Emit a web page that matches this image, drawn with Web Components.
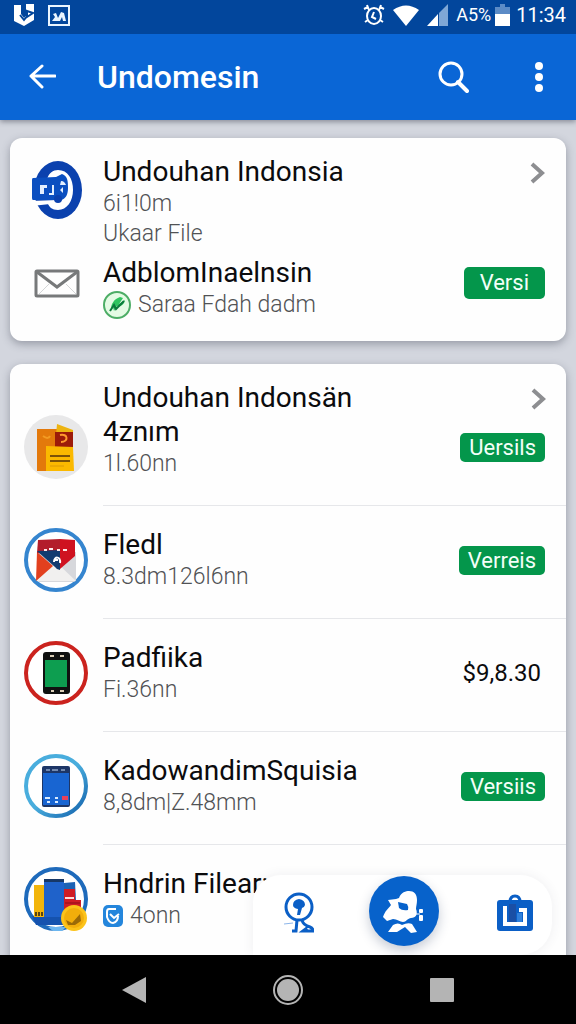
<!DOCTYPE html>
<html lang="id">
<head>
<meta charset="utf-8">
<meta name="viewport" content="width=device-width, initial-scale=1">
<title>Undomesin</title>
<style>
    body {
        margin: 0;
        font-family: Roboto, "Liberation Sans", sans-serif;
        color: #0b0b0d;
    }
</style>
</head>
<body>
<phone-screen>
    <status-bar slot="top"></status-bar>
    <app-bar slot="top">Undomesin</app-bar>

    <file-card>
        <file-item top>
            <app-icon slot="media" name="logo"></app-icon>
            <span slot="title">Undouhan Indonsia</span>
            <span slot="detail">6i1!0m</span>
            <span slot="detail">Ukaar File</span>
            <app-icon slot="action" name="chevron"></app-icon>
        </file-item>
        <file-item top>
            <app-icon slot="media" name="mail"></app-icon>
            <span slot="title">AdblomInaelnsin</span>
            <app-icon slot="badge" name="leaf"></app-icon>
            <span slot="detail">Saraa Fdah dadm</span>
            <version-button slot="action" large>Versi</version-button>
        </file-item>
    </file-card>

    <file-card list>
        <card-heading>Undouhan Indonsän</card-heading>
        <file-item>
            <app-icon slot="media" name="notes"></app-icon>
            <span slot="title">4znım</span>
            <span slot="detail">1l.60nn</span>
            <version-button slot="action">Uersils</version-button>
        </file-item>
        <file-item>
            <app-icon slot="media" name="letter"></app-icon>
            <span slot="title">Fledl</span>
            <span slot="detail">8.3dm126l6nn</span>
            <version-button slot="action">Verreis</version-button>
        </file-item>
        <file-item>
            <app-icon slot="media" name="phone"></app-icon>
            <span slot="title">Padfiika</span>
            <span slot="detail">Fi.36nn</span>
            <span slot="action">$9,8.30</span>
        </file-item>
        <file-item>
            <app-icon slot="media" name="tablet"></app-icon>
            <span slot="title">KadowandimSquisia</span>
            <span slot="detail">8,8dm|Z.48mm</span>
            <version-button slot="action">Versiis</version-button>
        </file-item>
        <file-item>
            <app-icon slot="media" name="books"></app-icon>
            <span slot="title">Hndrin Filear:</span>
            <app-icon slot="badge" name="check"></app-icon>
            <span slot="detail">4onn</span>
        </file-item>
    </file-card>

    <floating-bar slot="float"></floating-bar>
    <system-nav slot="bottom"></system-nav>
</phone-screen>

<script>
const icons = {
    'book': `<svg width="20" height="22" viewBox="0 0 20 22"><path d="M0 1h7v9l3 4 2-2V0h8v16l-10 6L0 17z" fill="#fff"/><path d="M10 1v11m-4-1 4 5 4-5M13 7l6 2-6 4z" stroke="#02469c" stroke-width="2" fill="none"/></svg>`,
    'photo': `<svg width="22" height="21" viewBox="0 0 22 21"><rect x="1" y="1" width="20" height="19" fill="none" stroke="#eaf5ff" stroke-width="2"/><path d="M4 16l3-4-2-3 3-1 2 5 3-6 3 1 2 8h-3l-1-4-2 4z" fill="#eaf5ff"/></svg>`,
    'alarm': `<svg width="22" height="22" viewBox="0 0 22 22" fill="none" stroke="#fff" stroke-width="2"><ellipse cx="11" cy="12" rx="7" ry="8"/><path d="M1 5l4-2M4 1l2 5M21 5l-4-2M18 1l-2 5M2 18l3-2M20 18l-3-2M11 8l-2 5 4 2"/></svg>`,
    'wifi': `<svg width="26" height="21" viewBox="0 0 26 21"><path d="M0 5Q13-4 26 5L13 21z" fill="#fff"/></svg>`,
    'signal': `<svg width="21" height="22" viewBox="0 0 21 22"><path d="M12 9l9-9v22h-9z" fill="#7fa7d6"/><path d="M0 22L11 10v12z" fill="#fff"/></svg>`,
    'battery': `<svg width="15" height="22" viewBox="0 0 15 22"><path d="M5 0h5v3h5v8H0V3h5z" fill="#5c8bc6"/><path d="M0 10h15v12H0z" fill="#fff"/></svg>`,
    'back': `<svg width="28" height="26" viewBox="0 0 28 26" fill="none" stroke="#fff" stroke-width="3" stroke-linecap="round" stroke-linejoin="round"><path d="M27 12H3M14 2L3 12l11 11"/></svg>`,
    'search': `<svg width="32" height="34" viewBox="0 0 32 34" fill="none" stroke="#fff" stroke-width="3"><circle cx="14" cy="14" r="11"/><path d="M21 22l9 9" stroke-width="4" stroke-linecap="round"/></svg>`,
    'more': `<svg width="8" height="30" viewBox="0 0 8 30" fill="#fff"><circle cx="4" cy="4" r="4"/><circle cx="4" cy="15" r="4"/><circle cx="4" cy="26" r="4"/></svg>`,
    'chevron': `<svg width="15" height="34" viewBox="0 0 15 34" fill="none" stroke="#8d8e91" stroke-width="4"><path d="M2 9l10 9-10 9"/></svg>`,
    'logo': `<svg width="64" height="70" viewBox="0 0 64 70">
        <ellipse cx="34" cy="35" rx="24" ry="29" fill="#0b41ae"/>
        <path d="M34 15c10 0 15 9 15 20S43 55 34 55c-6 0-9-3-11-8l8-1h6l6-10-4-12H23c2-6 6-9 11-9z" fill="#fff"/>
        <path d="M9 23l23-1 6-3c6 2 6 8 6 14s-2 11-7 12H9q-1 0-1-2V25q0-2 1-2z" fill="#0b4fc0"/>
        <path d="M7 46l26-1 2 3-27 3z" fill="#fff"/>
        <path d="M16 30h7v3h-3v6h-4zM25 38h3v-8h2v10h-5zM37 26c3 0 4 2 5 4h-6zM36 35l3-3v6z" fill="#e3efff"/>
        <circle cx="34" cy="44" r="4" fill="#0b41ae"/>
    </svg>`,
    'mail': `<svg width="64" height="54" viewBox="0 0 64 54" fill="none" stroke="#77797a"><rect x="12" y="15" width="42" height="25" rx="1" stroke-width="3"/><path d="M13 16l20 15 20-15" stroke-width="3"/><path d="M15 38l10-10M52 38L42 28" stroke="#d3d5d6"/></svg>`,
    'leaf': `<svg width="28" height="28" viewBox="0 0 28 28"><circle cx="14" cy="14" r="13" fill="#e4fbe4" stroke="#4dad66" stroke-width="2"/><path d="M8 18c0-5 3-10 9-12l3 1-4 6 6-4-1 3c-2 3-5 4-7 3l-3 5-1-4z" fill="#2fc45f"/><path d="M7 20l4-6 2 4 8-8" stroke="#0b7a3b" stroke-width="2" fill="none"/></svg>`,
    'notes': `<svg width="64" height="64" viewBox="0 0 64 64">
        <circle cx="32" cy="32" r="32" fill="#e8e8e9"/>
        <path d="M13 14h20v42H13z" fill="#e3790b"/><path d="M19 21c4 3 6 2 7 0" stroke="#f39b23" stroke-width="2" fill="none"/>
        <path d="M33 9l16 6v5H32z" fill="#edb411"/>
        <path d="M31 17h18v16H31z" fill="#9d1b09"/><path d="M36 20c8-2 9 7 1 7" stroke="#ff9a2d" stroke-width="2" fill="none"/>
        <path d="M22 31l27 1 1 24H22z" fill="#fbb900"/>
        <path d="M26 41h20M26 46h20" stroke="#7c5307" stroke-width="2"/><path d="M26 51h14" stroke="#dc9b04"/>
    </svg>`,
    'letter': `<svg width="64" height="64" viewBox="0 0 64 64">
        <circle cx="32" cy="32" r="30" fill="#fff" stroke="#3585cf" stroke-width="4"/>
        <path d="M13 24h39v27q0 3-3 3H15q-2 0-2-3z" fill="#d7d8dc"/>
        <path d="M12 53l20-19 20 19z" fill="#f1f0ef"/>
        <path d="M13 24l16 14-17 15z" fill="#e2401f"/>
        <path d="M14 12l22-1v17l-23-3z" fill="#b31d2b"/>
        <path d="M36 11l15 1v16L36 41z" fill="#cf1220"/>
        <path d="M13 23l23-1v20q-3 0-5-3z" fill="#123b70"/>
        <path d="M20 22h3m2-1h4m4 1h3m3 0h4" stroke="#ffe9ea" stroke-width="2"/>
        <path d="M30 34c0-6 7-6 6 1M31 32h3" stroke="#fff" stroke-width="2" fill="none"/>
    </svg>`,
    'phone': `<svg width="64" height="64" viewBox="0 0 64 64">
        <circle cx="32" cy="32" r="30" fill="#fff" stroke="#cb231e" stroke-width="4"/>
        <rect x="19" y="11" width="27" height="42" rx="3" fill="#101211"/>
        <path d="M21 19h22v27H21z" fill="#0d9e50"/>
        <path d="M26 15h4M36 15h4M27 50h3M36 50h4" stroke="#d9cdb6" stroke-width="2"/>
    </svg>`,
    'tablet': `<svg width="64" height="64" viewBox="0 0 64 64">
        <defs><linearGradient id="ring" x1="0" y1="0" x2="1" y2="1"><stop offset="0.5" stop-color="#49addd"/><stop offset="1" stop-color="#1260ab"/></linearGradient></defs>
        <circle cx="32" cy="32" r="30" fill="#fff" stroke="url(#ring)" stroke-width="4"/>
        <rect x="18" y="12" width="28" height="41" rx="2" fill="#1d3667"/>
        <path d="M19 19h26v32H19z" fill="#1865d2"/>
        <path d="M22 16h4m2 0h6m3 0h4" stroke="#7189b0" stroke-width="2"/>
        <path d="M21 44h5m5 0h3M23 48h3m5 0h3" stroke="#d9ebff" stroke-width="2"/><path d="M38 44h6" stroke="#e7415b" stroke-width="4"/>
    </svg>`,
    'books': `<svg width="64" height="64" viewBox="0 0 64 64">
        <circle cx="32" cy="32" r="30" fill="#fff" stroke="#1e6abb" stroke-width="4"/>
        <path d="M8 49h34v9H12z" fill="#1552ae"/><path d="M24 60h18l-4 4h-9z" fill="#6cb6ef"/>
        <path d="M10 18h11v32H10z" fill="#f2b50c"/><path d="M12 45v4m3-4v4m3-4v4" stroke="#5a4410" stroke-width="2"/>
        <path d="M40 16l11-1 1 18H40z" fill="#1d62b4"/>
        <path d="M40 22h11v11h6v14H40z" fill="#d01c25"/><path d="M41 31h9" stroke="#ffd9d9" stroke-width="2"/><path d="M41 36h15" stroke="#8d0f18"/>
        <path d="M20 12h20v38H20z" fill="#1f62ca"/><path d="M20 12h20v3H20z" fill="#173867"/>
        <circle cx="50" cy="51" r="13" fill="#fcc31a"/><circle cx="50" cy="51" r="10" fill="#f2ae0b"/>
        <path d="M42 53l6 3 8-9 1 7-6 4h-7z" fill="#9b6a07"/>
    </svg>`,
    'check': `<svg width="20" height="22" viewBox="0 0 20 22"><rect width="20" height="22" rx="5" fill="#2486dc"/><path d="M13 4H6Q4 4 4 7v5q2 6 6 6 5-1 5-7" fill="none" stroke="#fff" stroke-width="2"/><path d="M7 9l4 4 5-4" fill="none" stroke="#fff" stroke-width="2"/></svg>`,
    'badge': `<svg width="32" height="42" viewBox="0 0 32 42" fill="none" stroke="#0b5fc6">
        <circle cx="17" cy="15" r="13" stroke-width="3"/>
        <path d="M11 13q0-5 6-6 6 1 6 6-1 3-3 3l-2 7h-3l1-6q-5-1-5-4z" fill="#0b5fc6" stroke="none"/>
        <path d="M15 28l-1 11h-4M20 28q1 5 8 7 3 1 3 4H21l4-3" stroke-width="3"/><path d="M2 32l9-1" stroke="#8db6ea"/>
    </svg>`,
    'person': `<svg width="70" height="70" viewBox="0 0 70 70">
        <path d="M30 22c2-6 7-7 10-7 5 0 8 3 8 9 0 4-1 6-1 9 2 5 0 9-5 9-3 0-5 4-8 4s-6-3-10-3l-6 2-4-4c2-6 5-8 8-12l-3-5 8-1z" fill="#fff"/>
        <path d="M29 26l9 2q2 3 1 6-6 1-9-2z" fill="#0762cb"/>
        <path d="M19 56l5-7q5-3 9 0 6-3 10-1l5 8-6 1-6-6-8 5z" fill="#fff"/>
        <rect x="50" y="33" width="4" height="4" rx="1" fill="#fff"/><rect x="50" y="39" width="4" height="6" rx="1" fill="#fff"/>
        <path d="M46 38h5" stroke="#fff" stroke-width="1"/>
    </svg>`,
    'case': `<svg width="38" height="38" viewBox="0 0 38 38" fill="none">
        <rect x="1" y="6" width="36" height="31" rx="3" fill="#0b5fc6"/>
        <path d="M14 8q0-6 5-6t5 6" stroke="#0b5fc6" stroke-width="3"/>
        <path d="M9 12v18h20V16h-6" stroke="#fff" stroke-width="4"/>
        <path d="M13 10h7v18h-7z" fill="#1a4fa5"/><path d="M21 19h5v9h-5z" fill="#2f80dc"/>
    </svg>`,
    'nav-back': `<svg width="24" height="28" viewBox="0 0 24 28"><path d="M24 1v26L0 14z" fill="#b4b4b4"/></svg>`,
    'nav-home': `<svg width="30" height="30" viewBox="0 0 30 30"><circle cx="15" cy="15" r="14" fill="none" stroke="#b4b4b4" stroke-width="2"/><circle cx="15" cy="15" r="11" fill="#b4b4b4"/></svg>`,
    'nav-recent': `<svg width="24" height="26" viewBox="0 0 24 26"><rect y="1" width="24" height="24" rx="1" fill="#b4b4b4"/></svg>`
};

class BaseElement extends HTMLElement {
    constructor() {
        super();
        this.shadowDOM = this.attachShadow({ mode: 'open' });
    }

    connectedCallback() {
        this.shadowDOM.innerHTML = `
            <style>${this.templateCss()}</style>
            ${this.template()}
        `;
    }
}

class AppIcon extends BaseElement {
    template() {
        return icons[this.getAttribute('name')] || '';
    }

    templateCss() {
        return `
            :host { display: block; flex: none; }
            svg { display: block; }
        `;
    }
}

class PhoneScreen extends BaseElement {
    template() {
        return `
        <header><slot name="top"></slot></header>
        <main>
            <slot></slot>
            <div class="float"><slot name="float"></slot></div>
        </main>
        <slot name="bottom"></slot>
        `;
    }

    templateCss() {
        return `
            :host {
                display: flex;
                flex-direction: column;
                height: 100vh;
                background: #d3d6de;
            }
            header {
                position: relative;
                z-index: 1;
                box-shadow: 0 2px 5px rgba(50, 55, 70, 0.45);
            }
            main {
                position: relative;
                flex: 1;
                min-height: 0;
                overflow: hidden;
                display: flex;
                flex-direction: column;
                gap: 23px;
                padding: 18px 10px 0;
            }
            .float {
                position: absolute;
                left: 44%;
                right: 24px;
                bottom: 0;
            }
        `;
    }
}

class StatusBar extends BaseElement {
    template() {
        return `
        <app-icon name="book"></app-icon>
        <app-icon name="photo"></app-icon>
        <span class="space"></span>
        <app-icon name="alarm"></app-icon>
        <app-icon name="wifi"></app-icon>
        <app-icon name="signal"></app-icon>
        <span>A5%</span>
        <app-icon name="battery"></app-icon>
        <time>11:34</time>
        `;
    }

    templateCss() {
        return `
            :host {
                display: flex;
                align-items: center;
                gap: 8px;
                height: 30px;
                padding: 0 10px 4px 14px;
                background: #02469c;
                color: #fff;
                font-size: 18px;
                line-height: 30px;
            }
            app-icon:nth-of-type(2) { margin-left: 6px; }
            .space { flex: 1; }
            app-icon[name="battery"] { margin: 0 -2px 0 -4px; }
            time { font-size: 20px; }
        `;
    }
}

class AppBar extends BaseElement {
    template() {
        return `
        <button aria-label="Kembali"><app-icon name="back"></app-icon></button>
        <h1><slot></slot></h1>
        <button aria-label="Cari"><app-icon name="search"></app-icon></button>
        <button aria-label="Menu"><app-icon name="more"></app-icon></button>
        `;
    }

    templateCss() {
        return `
            :host {
                display: flex;
                align-items: center;
                height: 86px;
                padding: 0 13px 0 18px;
                background: #0a66d6;
                color: #fff;
            }
            h1 {
                flex: 1;
                margin: 0 0 0 31px;
                font-size: 32px;
                font-weight: 500;
                line-height: 40px;
            }
            button {
                display: grid;
                place-items: center;
                width: 48px;
                height: 48px;
                padding: 0;
                border: 0;
                background: none;
            }
            button:last-of-type { margin-left: 38px; }
        `;
    }
}

class FileCard extends BaseElement {
    template() {
        return `<slot></slot>`;
    }

    templateCss() {
        return `
            :host {
                display: flex;
                flex-direction: column;
                gap: 7px;
                flex: none;
                padding: 17px 0 21px;
                border-radius: 12px;
                background: #fefefe;
                box-shadow: 0 3px 8px rgba(60, 65, 80, 0.4);
            }
            :host([list]) {
                gap: 0;
                padding-bottom: 24px;
            }
            :host([list]) ::slotted(file-item) { padding-bottom: 26px; }
            :host([list]) ::slotted(file-item:nth-of-type(n + 2)) {
                --line: #e6e7ea;
                padding-top: 23px;
            }
        `;
    }
}

class CardHeading extends BaseElement {
    template() {
        return `
        <h2><slot></slot></h2>
        <app-icon name="chevron"></app-icon>
        `;
    }

    templateCss() {
        return `
            :host {
                display: flex;
                justify-content: space-between;
                padding: 0 20px 0 93px;
            }
            h2 {
                margin: 0;
                font-size: 28px;
                font-weight: 400;
                line-height: 34px;
            }
        `;
    }
}

class FileItem extends BaseElement {
    template() {
        return `
        <hr>
        <slot name="media"></slot>
        <div class="text">
            <div class="title"><slot name="title"></slot></div>
            <div class="detail">
                <slot name="badge"></slot>
                <div><slot name="detail"></slot></div>
            </div>
        </div>
        <div class="action"><slot name="action"></slot></div>
        `;
    }

    templateCss() {
        return `
            :host {
                position: relative;
                display: flex;
                align-items: center;
                gap: 15px;
                padding: 0 21px 0 14px;
            }
            :host([top]) { align-items: flex-start; }
            hr {
                position: absolute;
                top: 0;
                left: 93px;
                right: 0;
                margin: 0;
                border: 0;
                border-top: 1px solid var(--line, transparent);
            }
            .text {
                flex: 1;
                min-width: 0;
                white-space: nowrap;
            }
            .title {
                font-size: 28px;
                line-height: 34px;
            }
            .detail {
                display: flex;
                align-items: center;
                gap: 7px;
                color: #515255;
                font-size: 23px;
                font-weight: 300;
                line-height: 30px;
            }
            ::slotted([slot="detail"]) { display: block; }
            .action { font-size: 24px; line-height: 34px; }
            ::slotted(span[slot="action"]) { margin-right: 4px; }
            :host([top]) ::slotted(version-button) { margin-top: 11px; }
        `;
    }
}

class VersionButton extends BaseElement {
    template() {
        return `<button><slot></slot></button>`;
    }

    templateCss() {
        return `
            :host { display: block; }
            button {
                display: block;
                padding: 0 9px;
                border: 0;
                border-radius: 5px;
                background: #04964b;
                color: #f3fff8;
                font: 22px/29px Roboto, "Liberation Sans", sans-serif;
            }
            :host([large]) button {
                padding: 0 16px;
                line-height: 32px;
            }
        `;
    }
}

class FloatingBar extends BaseElement {
    template() {
        return `
        <button aria-label="Lencana"><app-icon name="badge"></app-icon></button>
        <button class="main" aria-label="Profil"><app-icon name="person"></app-icon></button>
        <button aria-label="Koleksi"><app-icon name="case"></app-icon></button>
        `;
    }

    templateCss() {
        return `
            :host {
                display: flex;
                align-items: center;
                justify-content: space-between;
                height: 80px;
                padding: 0 10px 0 18px;
                border-radius: 28px 32px 32px 0;
                background: #fff;
                box-shadow: 0 0 12px rgba(60, 70, 90, 0.08);
            }
            button {
                display: grid;
                place-items: center;
                width: 54px;
                height: 60px;
                margin-bottom: 4px;
                padding: 0;
                border: 0;
                background: none;
            }
            .main {
                width: 70px;
                height: 70px;
                margin: 0 6px 8px 0;
                border-radius: 50%;
                background: #0762cb;
                box-shadow: 0 5px 12px rgba(30, 50, 90, 0.25);
            }
        `;
    }
}

class SystemNav extends BaseElement {
    template() {
        return `
        <button aria-label="Kembali"><app-icon name="nav-back"></app-icon></button>
        <button aria-label="Beranda"><app-icon name="nav-home"></app-icon></button>
        <button aria-label="Terbaru"><app-icon name="nav-recent"></app-icon></button>
        `;
    }

    templateCss() {
        return `
            :host {
                display: grid;
                grid-template-columns: repeat(3, 1fr);
                height: 69px;
                padding: 0 10%;
                background: #000;
            }
            button {
                display: grid;
                place-items: center;
                padding: 0;
                border: 0;
                background: none;
            }
        `;
    }
}

window.customElements.define('app-icon', AppIcon);
window.customElements.define('phone-screen', PhoneScreen);
window.customElements.define('status-bar', StatusBar);
window.customElements.define('app-bar', AppBar);
window.customElements.define('file-card', FileCard);
window.customElements.define('card-heading', CardHeading);
window.customElements.define('file-item', FileItem);
window.customElements.define('version-button', VersionButton);
window.customElements.define('floating-bar', FloatingBar);
window.customElements.define('system-nav', SystemNav);
</script>
</body>
</html>
